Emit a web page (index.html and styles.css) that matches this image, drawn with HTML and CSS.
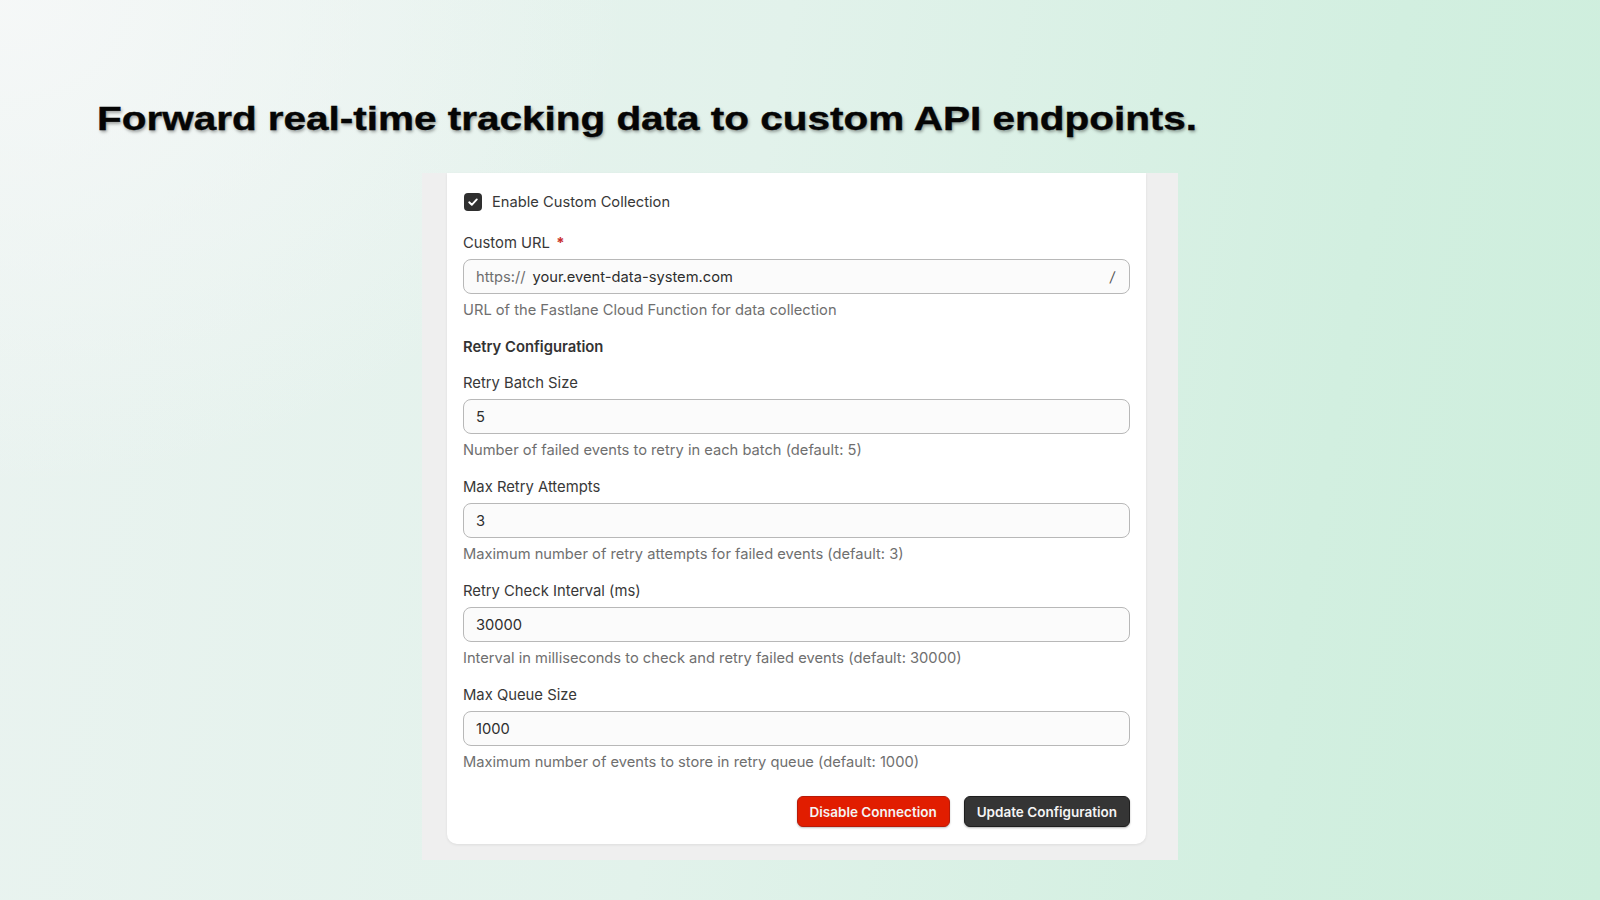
FILE: index.html
```html
<!DOCTYPE html>
<html lang="en">
<head>
<meta charset="utf-8">
<title>Custom Collection</title>
<link rel="stylesheet" href="styles.css">
</head>
<body>
<main class="page">
  <h1 class="headline">Forward real-time tracking data to custom API endpoints.</h1>
  <section class="frame">
    <div class="card">
      <label class="check-row">
        <span class="checkbox">
          <svg viewBox="0 0 18 18" width="18" height="18"><path d="M5.2 9.3 L7.8 11.8 L12.8 6.4" fill="none" stroke="#fff" stroke-width="1.9" stroke-linecap="round" stroke-linejoin="round"/></svg>
        </span>
        <span class="check-label">Enable Custom Collection</span>
      </label>

      <div class="field">
        <div class="label">Custom URL <span class="req">*</span></div>
        <div class="input url">
          <span class="prefix">https://</span>
          <span class="value">your.event-data-system.com</span>
          <span class="suffix">/</span>
        </div>
        <div class="help">URL of the Fastlane Cloud Function for data collection</div>
      </div>

      <div class="section-title">Retry Configuration</div>

      <div class="field">
        <div class="label">Retry Batch Size</div>
        <div class="input"><span class="value">5</span></div>
        <div class="help">Number of failed events to retry in each batch (default: 5)</div>
      </div>

      <div class="field">
        <div class="label">Max Retry Attempts</div>
        <div class="input"><span class="value">3</span></div>
        <div class="help">Maximum number of retry attempts for failed events (default: 3)</div>
      </div>

      <div class="field">
        <div class="label">Retry Check Interval (ms)</div>
        <div class="input"><span class="value">30000</span></div>
        <div class="help">Interval in milliseconds to check and retry failed events (default: 30000)</div>
      </div>

      <div class="field">
        <div class="label">Max Queue Size</div>
        <div class="input"><span class="value">1000</span></div>
        <div class="help">Maximum number of events to store in retry queue (default: 1000)</div>
      </div>

      <div class="actions">
        <button class="btn btn-danger">Disable Connection</button>
        <button class="btn btn-dark">Update Configuration</button>
      </div>
    </div>
  </section>
</main>
</body>
</html>
```

FILE: styles.css
```css
* { box-sizing: border-box; }

html, body {
  margin: 0;
  height: 100%;
}

body {
  width: 1600px;
  height: 900px;
  overflow: hidden;
  font-family: Inter, "Noto Sans", sans-serif;
  background:
    radial-gradient(ellipse 900px 700px at 0% 0%, rgba(246, 248, 248, 0.95), rgba(246, 248, 248, 0) 70%),
    linear-gradient(100deg, #eaf3f0 0%, #e2f2eb 45%, #d2efe0 80%, #cdeedc 100%);
}

.page {
  display: flex;
  flex-direction: column;
  padding-top: 98px;
}

.headline {
  align-self: flex-start;
  margin: 0 0 35px 97px;
  font-family: "Liberation Sans", Arial, sans-serif;
  font-weight: 700;
  font-size: 34px;
  line-height: 40px;
  color: #050505;
  white-space: nowrap;
  transform: scaleX(1.19);
  transform-origin: left center;
  -webkit-text-stroke: 0.4px #050505;
  text-shadow: 1px 2px 3px rgba(0, 0, 0, 0.38);
}

.frame {
  align-self: center;
  width: 756px;
  background: #efefef;
  padding: 0 32px 16px 25px;
}

.card {
  background: #ffffff;
  border-radius: 0 0 10px 10px;
  box-shadow: 0 1px 3px rgba(0, 0, 0, 0.08);
  padding: 19px 16px 17px 16px;
  display: flex;
  flex-direction: column;
}

.check-row {
  display: flex;
  align-items: center;
  gap: 10px;
  height: 20px;
  margin-bottom: 21px;
}

.checkbox {
  width: 18px;
  height: 18px;
  border-radius: 4px;
  background: #2f2f2f;
  display: flex;
  margin-left: 1px;
}

.check-label {
  font-size: 14.7px;
  line-height: 20px;
  color: #383838;
}

.field {
  display: flex;
  flex-direction: column;
  margin-bottom: 17px;
}

.label {
  font-size: 14.8px;
  line-height: 20px;
  color: #383838;
  margin-bottom: 6px;
}

.req {
  color: #c9302c;
  font-weight: 700;
  margin-left: 2px;
}

.input {
  height: 35px;
  border: 1.5px solid #b8b8b8;
  border-radius: 8px;
  background: #fbfbfb;
  display: flex;
  align-items: center;
  padding: 0 12px;
  font-size: 14.7px;
  color: #2e2e2e;
}

.input .prefix {
  color: #6e6e6e;
  margin-right: 7px;
}

.input .value {
  flex: 1;
}

.input .suffix {
  color: #555;
  font-size: 14px;
  padding-right: 2px;
  transform: skewX(-8deg);
}

.help {
  margin-top: 6px;
  font-size: 14.7px;
  line-height: 20px;
  color: #6f6f6f;
}

.section-title {
  font-size: 14.8px;
  line-height: 20px;
  font-weight: 600;
  color: #333;
  margin-bottom: 16px;
}

.actions {
  display: flex;
  justify-content: flex-end;
  gap: 14px;
  margin-top: 7px;
}

.btn {
  height: 31px;
  padding: 0 12px;
  border-radius: 6px;
  font-family: Inter, "Noto Sans", sans-serif;
  font-size: 13.5px;
  font-weight: 600;
  color: #f4f4f4;
  cursor: pointer;
}

.btn-danger {
  background: #e11d00;
  border: 1px solid #b81a08;
  box-shadow: 0 1px 2px rgba(0, 0, 0, 0.25);
}

.btn-dark {
  background: #353535;
  border: 1px solid #1e1e1e;
  box-shadow: 0 1px 2px rgba(0, 0, 0, 0.3);
}
```
